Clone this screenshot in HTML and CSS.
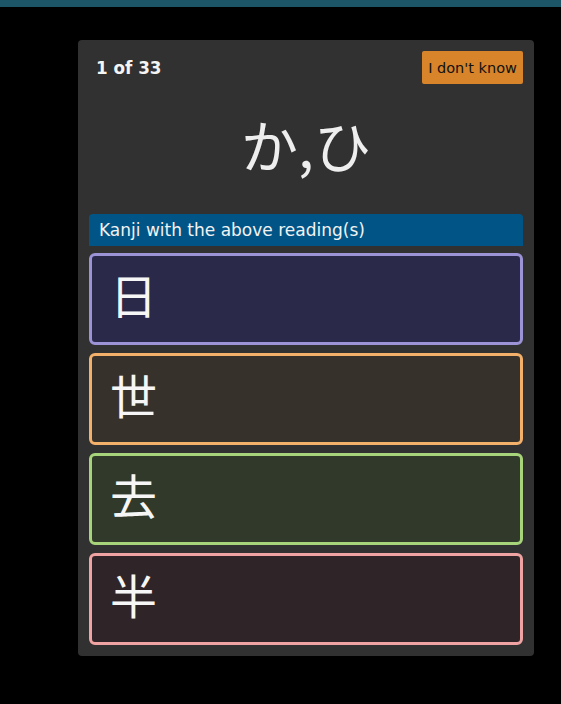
FILE: index.html
```html
<!DOCTYPE html>
<html lang="en">
<head>
<meta charset="utf-8">
<title>Kanji quiz</title>
<link rel="stylesheet" href="styles.css">
</head>
<body>
<div class="topbar"></div>
<main class="card">
  <div class="card-head">
    <span class="progress">1 of 33</span>
    <button class="dontknow">I don't know</button>
  </div>
  <div class="reading" lang="ja">か,ひ</div>
  <div class="prompt">Kanji with the above reading(s)</div>
  <div class="options" lang="ja">
    <div class="option opt-purple">日</div>
    <div class="option opt-orange">世</div>
    <div class="option opt-green">去</div>
    <div class="option opt-pink">半</div>
  </div>
</main>
</body>
</html>
```
FILE: styles.css
```css
html, body {
  margin: 0;
  padding: 0;
  background: #000;
  font-family: "DejaVu Sans", Verdana, sans-serif;
  color: #fff;
}

.topbar {
  height: 7px;
  background: #1b5566;
}

.card {
  display: flex;
  flex-direction: column;
  box-sizing: border-box;
  width: 456px;
  margin: 33px 0 0 78px;
  padding: 11px 11px 11px 11px;
  background: #303130;
  border-radius: 4px;
}

.card-head {
  display: flex;
  justify-content: space-between;
  align-items: center;
  height: 33px;
}

.progress {
  padding-left: 7px;
  font-weight: bold;
  font-size: 16.8px;
  color: #f4f4f4;
}

.dontknow {
  height: 33px;
  width: 101px;
  padding: 0;
  border: none;
  border-radius: 2px;
  background: #d8842a;
  color: #111;
  font-family: "DejaVu Sans", Verdana, sans-serif;
  font-size: 14.5px;
}

.reading {
  box-sizing: border-box;
  height: 130px;
  padding-bottom: 12px;
  display: flex;
  align-items: center;
  justify-content: center;
  font-family: "Noto Sans CJK JP", "Noto Sans", sans-serif;
  font-size: 57px;
  color: #eeeeee;
}

.prompt {
  height: 32px;
  display: flex;
  align-items: center;
  padding-left: 10px;
  background: #015586;
  border-radius: 4px 4px 0 0;
  font-size: 17px;
  color: #f2f2f2;
}

.options {
  display: flex;
  flex-direction: column;
  gap: 8px;
  margin-top: 7px;
}

.option {
  box-sizing: border-box;
  height: 92px;
  display: flex;
  align-items: center;
  padding: 0 0 12px 18px;
  border: 3px solid;
  border-radius: 6px;
  font-family: "Noto Sans CJK JP", sans-serif;
  font-size: 47px;
  color: #f6f6f6;
}

.opt-purple { border-color: #9b93d6; background: #2b294a; }
.opt-orange { border-color: #f3b06b; background: #37312c; }
.opt-green  { border-color: #a7d47a; background: #31392a; }
.opt-pink   { border-color: #f0a3a3; background: #2f2428; }
```
